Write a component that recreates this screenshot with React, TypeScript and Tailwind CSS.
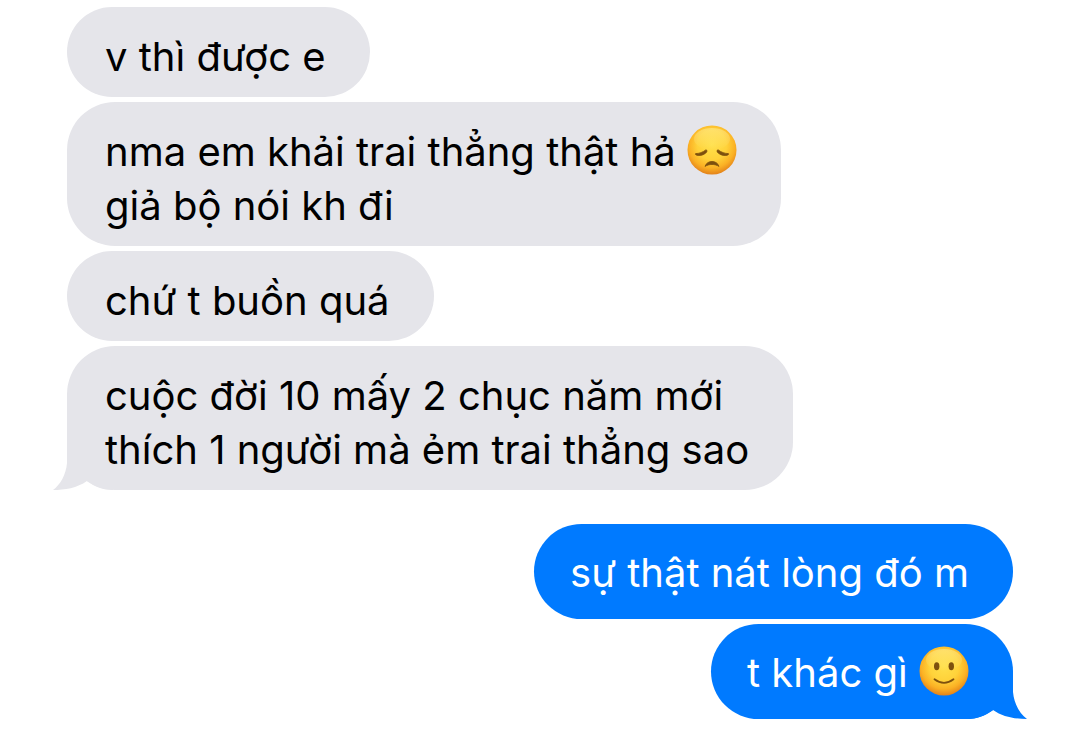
import { Fragment } from "react";
import clsx from "clsx";

type Mood = "sad" | "smile";

type Line = {
  text: string;
  emoji?: Mood;
};

type Message = {
  id: number;
  mine: boolean;
  lines: Line[];
};

const GROUPS: Message[][] = [
  [
    { id: 1, mine: false, lines: [{ text: "v thì được e" }] },
    {
      id: 2,
      mine: false,
      lines: [
        { text: "nma em khải trai thẳng thật hả", emoji: "sad" },
        { text: "giả bộ nói kh đi" },
      ],
    },
    { id: 3, mine: false, lines: [{ text: "chứ t buồn quá" }] },
    {
      id: 4,
      mine: false,
      lines: [
        { text: "cuộc đời 10 mấy 2 chục năm mới" },
        { text: "thích 1 người mà ẻm trai thẳng sao" },
      ],
    },
  ],
  [
    { id: 5, mine: true, lines: [{ text: "sự thật nát lòng đó m" }] },
    { id: 6, mine: true, lines: [{ text: "t khác gì", emoji: "smile" }] },
  ],
];

function Emoji({ mood }: { mood: Mood }) {
  return (
    <svg
      role="img"
      aria-label={mood === "sad" ? "disappointed face" : "slightly smiling face"}
      viewBox="0 0 50 50"
      className="inline-block size-[50px] align-[-9px]"
    >
      <defs>
        <radialGradient id={`face-${mood}`} cx="0.5" cy="0.4" r="0.6">
          <stop offset="0" stopColor="#ffe04a" />
          <stop offset="0.5" stopColor="#ffd23a" />
          <stop offset="0.78" stopColor="#fbb124" />
          <stop offset="1" stopColor="#e3821a" />
        </radialGradient>
        <linearGradient id={`shine-${mood}`} x1="0" y1="0" x2="0" y2="1">
          <stop offset="0" stopColor="#fff2a0" stopOpacity="0.5" />
          <stop offset="1" stopColor="#fff2a0" stopOpacity="0" />
        </linearGradient>
      </defs>
      <circle cx="25" cy="25" r="24.5" fill={`url(#face-${mood})`} />
      <ellipse cx="25" cy="14" rx="18" ry="11" fill={`url(#shine-${mood})`} />
      {mood === "sad" ? (
        <g fill="#7d500e" stroke="#7d500e" strokeLinejoin="round" strokeWidth="0.8">
          <path d="M8.6 28.6C12 28.6 16 27.2 18.8 24.9C20.6 24.9 20.2 26.8 18.6 28.2C15.6 30.7 11.5 31 9 29.9C8.3 29.5 8.2 28.9 8.6 28.6Z" />
          <path d="M41.4 28.6C38 28.6 34 27.2 31.2 24.9C29.4 24.9 29.8 26.8 31.4 28.2C34.4 30.7 38.5 31 41 29.9C41.7 29.5 41.8 28.9 41.4 28.6Z" />
          <path d="M18 41.4C20 34.8 30 34.8 32 41.4C28 38.8 22 38.8 18 41.4Z" />
        </g>
      ) : (
        <g>
          <ellipse cx="17.7" cy="20.3" rx="2.7" ry="4" fill="#7d500e" />
          <ellipse cx="32.3" cy="20.3" rx="2.7" ry="4" fill="#7d500e" />
          <path
            d="M15.5 33.3Q25 40.5 34.5 33.3"
            fill="none"
            stroke="#7d500e"
            strokeWidth="1.8"
            strokeLinecap="round"
          />
        </g>
      )}
    </svg>
  );
}

// Squares off the rounded bottom corner and adds the little hook below it
function Tail({ mine }: { mine: boolean }) {
  return (
    <svg
      aria-hidden="true"
      viewBox="0 0 60 60"
      className={clsx(
        "absolute bottom-0 size-[60px]",
        mine ? "-right-[14px] -scale-x-100 text-[#007aff]" : "-left-[14px] text-[#e5e5ea]"
      )}
    >
      <path
        fill="currentColor"
        d="M14 12V33C13 45 7 55 0 60C12 60 24 58 34 51C42 57 50 60 60 60V12Z"
      />
    </svg>
  );
}

function Bubble({ message, last }: { message: Message; last: boolean }) {
  const { mine, lines } = message;
  return (
    <li
      className={clsx(
        "relative w-fit rounded-[48px] text-[40px] leading-[54px]",
        mine
          ? "self-end bg-[#007aff] pt-[22px] pr-[44px] pb-[19px] pl-[36px] text-white"
          : "self-start bg-[#e5e5ea] pt-[23px] pr-[44px] pb-[13px] pl-[38px] text-black"
      )}
    >
      {last && <Tail mine={mine} />}
      <p className="relative">
        {lines.map((line, i) => (
          <Fragment key={i}>
            {i > 0 && <br />}
            {line.text}
            {line.emoji && (
              <>
                {" "}
                <Emoji mood={line.emoji} />
              </>
            )}
          </Fragment>
        ))}
      </p>
    </li>
  );
}

export default function App() {
  return (
    <main className="flex min-h-screen flex-col gap-[34px] bg-white px-[67px] pt-[7px] pb-[11px] font-['Inter','Noto_Sans',sans-serif]">
      {GROUPS.map((group, i) => (
        <ul key={i} className="flex flex-col gap-[5px]">
          {group.map((message, j) => (
            <Bubble key={message.id} message={message} last={j === group.length - 1} />
          ))}
        </ul>
      ))}
    </main>
  );
}
